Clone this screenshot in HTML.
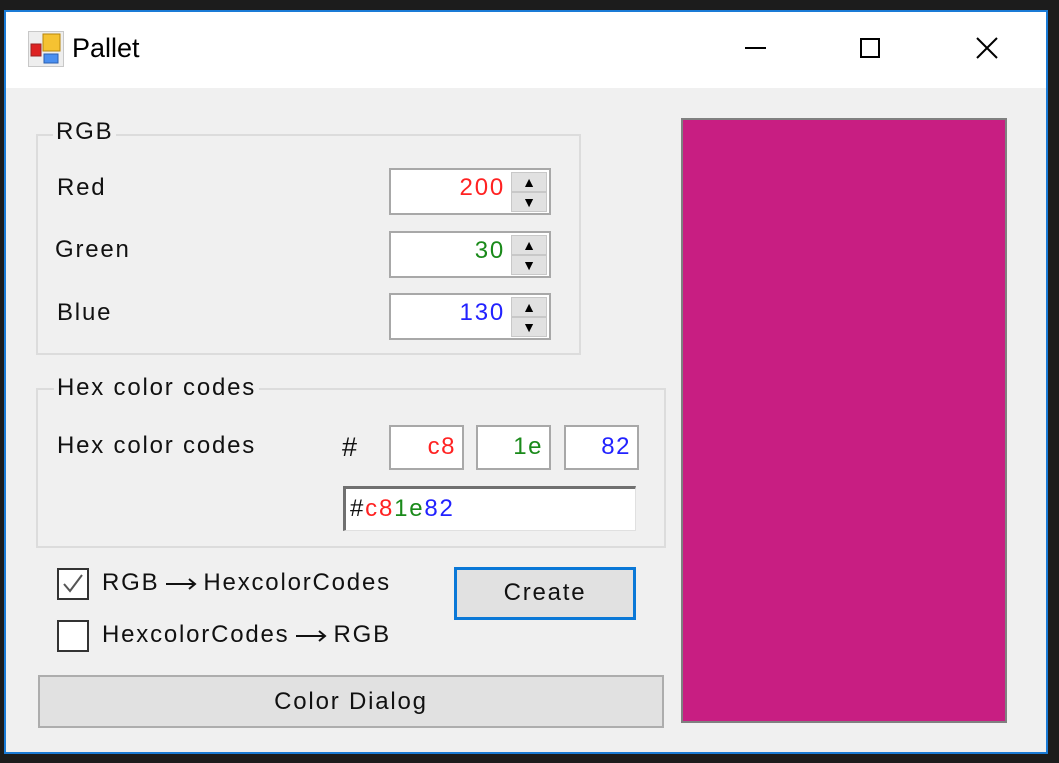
<!DOCTYPE html>
<html><head><meta charset="utf-8"><style>
*{box-sizing:border-box;margin:0;padding:0}
body{width:1059px;height:763px;background:#1c1c1c;position:relative;overflow:hidden;font-family:"Liberation Sans","Noto Sans CJK JP",sans-serif;font-size:24px;color:#111}
.a{position:absolute}
.t{letter-spacing:1.8px}
.win{left:4px;top:10px;width:1044px;height:744px;border:2px solid #1a7bd6;background:#f0f0f0}
.title{left:6px;top:12px;width:1040px;height:76px;background:#fff}
.gb{border:2px solid #dcdcdc}
.lbl{background:#f0f0f0;padding:0 3px;line-height:26px}
.tb{background:#fff;border:2px solid #a8a8a8;text-align:right;line-height:40px;padding-right:6px;letter-spacing:1.5px}
.spin{border:2px solid #a8a8a8;background:#fff}
.sb{position:absolute;right:2px;width:36px;background:#e1e1e1;border:1px solid #c8c8c8;text-align:center;font-size:14px;line-height:18px;color:#000}
.btn{background:#e1e1e1;border:2px solid #adadad;text-align:center}
.cb{width:32px;height:32px;border:2px solid #333;background:#fff}
.arr{display:inline-block;width:32px;height:14px;vertical-align:middle;margin:0 6px}
</style></head><body>
<div class="a win"></div>
<div class="a title"></div>
<svg class="a" style="left:28px;top:31px" width="36" height="36" viewBox="0 0 36 36">
<rect x="0.5" y="0.5" width="35" height="35" fill="#eee" stroke="#c8c8c8"/>
<rect x="15" y="3" width="17" height="17" fill="#f5c232" stroke="#b8860b"/>
<rect x="3" y="13" width="10" height="12" fill="#d22" stroke="#922"/>
<rect x="16" y="23" width="14" height="9" fill="#4a8ff0" stroke="#2a5fb0"/>
</svg>
<div class="a" style="left:72px;top:33px;font-size:27px;color:#000">Pallet</div>
<div class="a" style="left:745px;top:47px;width:21px;height:2px;background:#000"></div>
<div class="a" style="left:860px;top:38px;width:20px;height:20px;border:2px solid #000"></div>
<svg class="a" style="left:976px;top:37px" width="22" height="22"><path d="M1 1L21 21M21 1L1 21" stroke="#000" stroke-width="2"/></svg>

<div class="a" style="left:681px;top:118px;width:326px;height:605px;background:#c81e82;border:2px solid #808080"></div>

<div class="a gb" style="left:36px;top:134px;width:545px;height:221px"></div>
<div class="a lbl t" style="left:53px;top:119px">RGB</div>
<div class="a t" style="left:57px;top:174px">Red</div>
<div class="a t" style="left:55px;top:236px">Green</div>
<div class="a t" style="left:57px;top:299px">Blue</div>

<div class="a spin" style="left:389px;top:168px;width:162px;height:47px"><div class="a t" style="right:44px;top:4px;color:#f22">200</div><div class="sb" style="top:2px;height:20px">▲</div><div class="sb" style="top:22px;height:20px">▼</div></div>
<div class="a spin" style="left:389px;top:231px;width:162px;height:47px"><div class="a t" style="right:44px;top:4px;color:#1a8a1a">30</div><div class="sb" style="top:2px;height:20px">▲</div><div class="sb" style="top:22px;height:20px">▼</div></div>
<div class="a spin" style="left:389px;top:293px;width:162px;height:47px"><div class="a t" style="right:44px;top:4px;color:#22f">130</div><div class="sb" style="top:2px;height:20px">▲</div><div class="sb" style="top:22px;height:20px">▼</div></div>

<div class="a gb" style="left:36px;top:388px;width:630px;height:160px"></div>
<div class="a lbl t" style="left:54px;top:375px">Hex color codes</div>
<div class="a t" style="left:57px;top:432px">Hex color codes</div>
<div class="a" style="left:342px;top:432px;font-size:27px">#</div>
<div class="a tb" style="left:389px;top:425px;width:75px;height:45px;color:#f22">c8</div>
<div class="a tb" style="left:476px;top:425px;width:75px;height:45px;color:#1a8a1a">1e</div>
<div class="a tb" style="left:564px;top:425px;width:75px;height:45px;color:#22f">82</div>
<div class="a t" style="left:343px;top:486px;width:293px;height:45px;background:#fff;border-top:3px solid #707070;border-left:3px solid #707070;border-right:1px solid #e0e0e0;border-bottom:1px solid #e0e0e0;padding-left:4px;line-height:40px">#<span style="color:#f22">c8</span><span style="color:#1a8a1a">1e</span><span style="color:#22f">82</span></div>

<div class="a cb" style="left:57px;top:568px"><svg width="28" height="28"><path d="M5 14L11 21L23 5" fill="none" stroke="#555" stroke-width="2"/></svg></div>
<div class="a t" style="left:102px;top:569px">RGB<svg class="arr" viewBox="0 0 32 14"><path d="M1 7H30M24 2L30 7L24 12" fill="none" stroke="#111" stroke-width="2"/></svg>HexcolorCodes</div>
<div class="a cb" style="left:57px;top:620px"></div>
<div class="a t" style="left:102px;top:621px">HexcolorCodes<svg class="arr" viewBox="0 0 32 14"><path d="M1 7H30M24 2L30 7L24 12" fill="none" stroke="#111" stroke-width="2"/></svg>RGB</div>
<div class="a btn t" style="left:454px;top:567px;width:182px;height:53px;border:3px solid #0a78d7;line-height:46px">Create</div>
<div class="a btn t" style="left:38px;top:675px;width:626px;height:53px;line-height:49px">Color Dialog</div>
</body></html>
